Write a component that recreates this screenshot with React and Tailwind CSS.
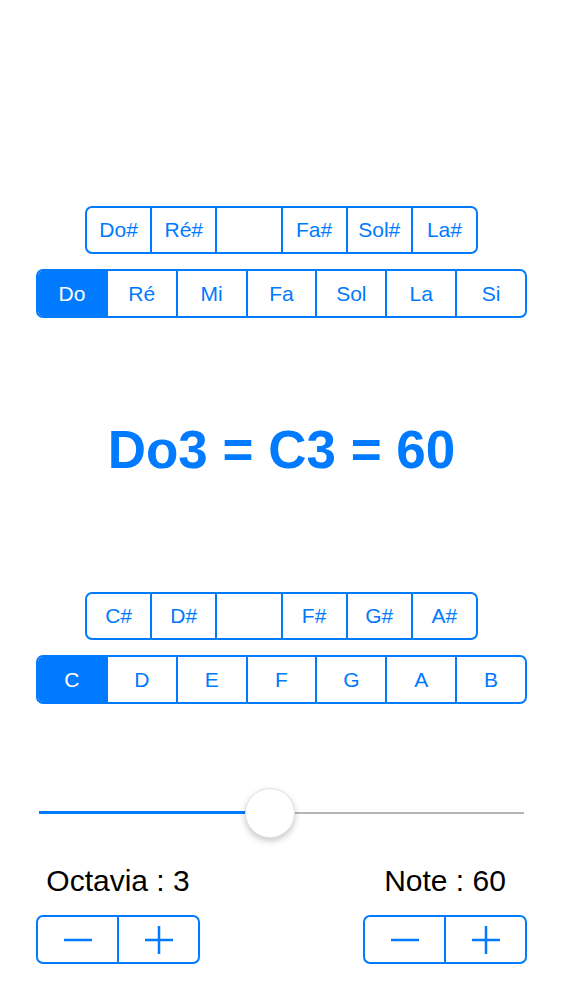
import React, { useState } from 'react';

const BLUE = '#007aff';

const SHARPS_FR = ['Do#', 'Ré#', '', 'Fa#', 'Sol#', 'La#'];
const NATURALS_FR = ['Do', 'Ré', 'Mi', 'Fa', 'Sol', 'La', 'Si'];
const SHARPS_EN = ['C#', 'D#', '', 'F#', 'G#', 'A#'];
const NATURALS_EN = ['C', 'D', 'E', 'F', 'G', 'A', 'B'];

const Segmented = ({ items, selected, className }) => (
    <div className={`flex border-2 border-[#007aff] rounded-[7px] overflow-hidden ${className}`}>
        {items.map((label, i) => (
            <div
                key={i}
                className={`flex-1 flex items-center justify-center text-[21px] ${i > 0 ? 'border-l-2 border-[#007aff]' : ''} ${selected === i ? 'bg-[#007aff] text-white' : 'text-[#007aff]'}`}
            >
                {label}
            </div>
        ))}
    </div>
);

const Stepper = ({ label }) => (
    <div className="flex flex-col items-center w-[164px]">
        <div className="text-[30px] leading-[34px] text-black whitespace-nowrap">{label}</div>
        <div className="mt-[17px] flex w-full h-[49px] border-2 border-[#007aff] rounded-[7px] overflow-hidden">
            <button className="flex-1 flex items-center justify-center">
                <svg width="30" height="28" viewBox="0 0 30 28">
                    <line x1="1" y1="14" x2="29" y2="14" stroke={BLUE} strokeWidth="2.5" />
                </svg>
            </button>
            <button className="flex-1 flex items-center justify-center border-l-2 border-[#007aff]">
                <svg width="28" height="28" viewBox="0 0 28 28">
                    <line x1="0" y1="14" x2="28" y2="14" stroke={BLUE} strokeWidth="2.5" />
                    <line x1="14" y1="0" x2="14" y2="28" stroke={BLUE} strokeWidth="2.5" />
                </svg>
            </button>
        </div>
    </div>
);

export default function App() {
    const [value] = useState(0.476);

    return (
        <div className="w-[563px] h-[1000px] bg-white flex flex-col overflow-hidden" style={{ fontFamily: '"Liberation Sans", Arial, sans-serif' }}>
            <Segmented items={SHARPS_FR} selected={-1} className="ml-[85px] mt-[206px] w-[393px] h-[48px]" />
            <Segmented items={NATURALS_FR} selected={0} className="ml-[36px] mt-[15px] w-[491px] h-[49px]" />

            <div className="mt-[102px] h-[60px] leading-[60px] text-center text-[53px] font-bold text-[#007aff]">
                Do3 = C3 = 60
            </div>

            <Segmented items={SHARPS_EN} selected={-1} className="ml-[85px] mt-[112px] w-[393px] h-[48px]" />
            <Segmented items={NATURALS_EN} selected={0} className="ml-[36px] mt-[15px] w-[491px] h-[49px]" />

            {/* slider */}
            <div className="relative mx-[39px] mt-[84px] h-[50px]">
                <div className="absolute left-0 right-0 top-[24px] h-[2px] bg-[#b5b5b5]" />
                <div className="absolute left-0 top-[23px] h-[3px] bg-[#007aff]" style={{ width: `${value * 100}%` }} />
                <div
                    className="absolute top-0 w-[50px] h-[50px] -ml-[25px] rounded-full bg-white border border-[#e2e2e2] shadow-[0_3px_6px_rgba(0,0,0,0.22)]"
                    style={{ left: `${value * 100}%` }}
                />
            </div>

            <div className="mt-[26px] px-[36px] flex justify-between">
                <Stepper label="Octavia : 3" />
                <Stepper label="Note : 60" />
            </div>
        </div>
    );
}
